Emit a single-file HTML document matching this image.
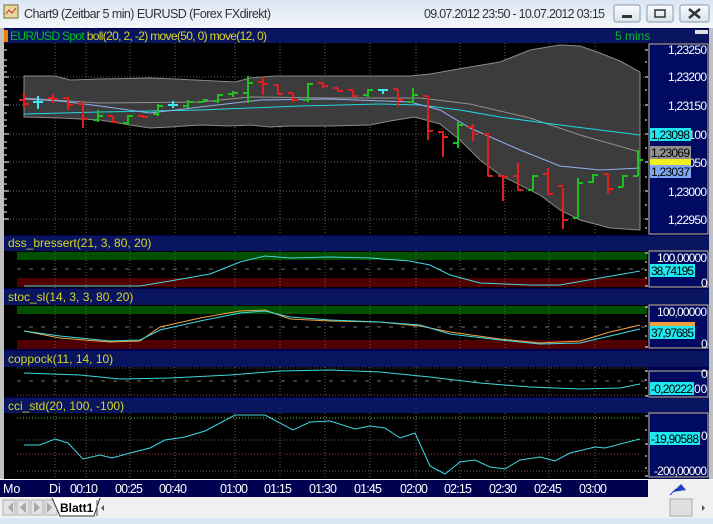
<!DOCTYPE html>
<html><head><meta charset="utf-8"><style>
html,body{margin:0;padding:0;width:713px;height:524px;overflow:hidden;background:#000050;font-family:"Liberation Sans",sans-serif}
</style></head><body>
<svg width="713" height="524" viewBox="0 0 713 524" xmlns="http://www.w3.org/2000/svg" font-family="Liberation Sans, sans-serif">
<defs><linearGradient id="tb" x1="0" y1="0" x2="0" y2="1"><stop offset="0" stop-color="#dbe6f4"/><stop offset="1" stop-color="#f4f7fb"/></linearGradient>
<linearGradient id="btn" x1="0" y1="0" x2="0" y2="1"><stop offset="0" stop-color="#fbfcfe"/><stop offset="1" stop-color="#d8e1ee"/></linearGradient></defs>
<rect x="0" y="0" width="713" height="28" fill="url(#tb)"/>
<rect x="4" y="5" width="14" height="13" fill="#e8d8a0" stroke="#7a6a30"/><path d="M6 14 L9 10 L12 13 L16 8" stroke="#c03030" fill="none"/>
<text x="24" y="18" font-size="12.5" fill="#333" textLength="247">Chart9 (Zeitbar 5 min)  EURUSD (Forex FXdirekt)</text>
<text x="424" y="18" font-size="12.5" fill="#333" textLength="181">09.07.2012 23:50 - 10.07.2012 03:15</text>
<rect x="614" y="5" width="26" height="17" rx="2" fill="url(#btn)" stroke="#8a9ab0"/><rect x="622" y="15" width="10" height="3" fill="#333"/>
<rect x="647" y="5" width="26" height="17" rx="2" fill="url(#btn)" stroke="#8a9ab0"/><rect x="655" y="10" width="10" height="7" fill="none" stroke="#333" stroke-width="1.5"/>
<rect x="680" y="5" width="29" height="17" rx="2" fill="url(#btn)" stroke="#8a9ab0"/><path d="M689 9 L700 18 M700 9 L689 18" stroke="#333" stroke-width="2.5"/>
<rect x="0" y="28" width="713" height="469" fill="#000050"/>
<rect x="0" y="28" width="4" height="469" fill="#c0c0c0"/>
<rect x="709" y="28" width="4" height="469" fill="#c0c0c0"/>
<rect x="4" y="29" width="705" height="14" fill="#0a1560"/>
<rect x="4" y="30" width="4" height="12" fill="#f08000"/>
<text x="10" y="40" font-size="12" textLength="257"><tspan fill="#00c020">EUR/USD Spot</tspan><tspan fill="#d8d820"> boll(20, 2, -2) move(50, 0) move(12, 0)</tspan></text>
<text x="615" y="40" font-size="12" fill="#00c020">5 mins</text>
<rect x="695" y="30" width="13" height="4" fill="#e0e0e0"/>
<g font-size="12" fill="#d8d820">
<rect x="4" y="236" width="705" height="15" fill="#0a1560"/><text x="8" y="247">dss_bressert(21, 3, 80, 20)</text>
<rect x="4" y="289" width="705" height="16" fill="#0a1560"/><text x="8" y="301">stoc_sl(14, 3, 3, 80, 20)</text>
<rect x="4" y="351" width="705" height="16" fill="#0a1560"/><text x="8" y="363">coppock(11, 14, 10)</text>
<rect x="4" y="398" width="705" height="15" fill="#0a1560"/><text x="8" y="410">cci_std(20, 100, -100)</text>
</g>
<rect x="4" y="43" width="644" height="192" fill="#000"/>
<rect x="4" y="251" width="644" height="37" fill="#000"/>
<rect x="4" y="305" width="644" height="44" fill="#000"/>
<rect x="4" y="367" width="644" height="30" fill="#000"/>
<rect x="4" y="413" width="644" height="66" fill="#000"/>
<rect x="17" y="252" width="630" height="8" fill="#005000"/><rect x="17" y="278" width="630" height="9" fill="#500000"/>
<rect x="17" y="306" width="630" height="8" fill="#005000"/><rect x="17" y="340" width="630" height="9" fill="#500000"/>
<g stroke="#606060" stroke-dasharray="1,2" stroke-width="1">
<path d="M55 43V235M86 43V235M130 43V235M175 43V235M235 43V235M280 43V235M325 43V235M370 43V235M416 43V235M460 43V235M505 43V235M549 43V235M595 43V235"/>
<path d="M4 77H648M4 105H648M4 134H648M4 162H648M4 191H648M4 219H648"/>
<path d="M55 251V288M86 251V288M130 251V288M175 251V288M235 251V288M280 251V288M325 251V288M370 251V288M416 251V288M460 251V288M505 251V288M549 251V288M595 251V288"/>
<path d="M55 305V349M86 305V349M130 305V349M175 305V349M235 305V349M280 305V349M325 305V349M370 305V349M416 305V349M460 305V349M505 305V349M549 305V349M595 305V349"/>
<path d="M55 367V397M86 367V397M130 367V397M175 367V397M235 367V397M280 367V397M325 367V397M370 367V397M416 367V397M460 367V397M505 367V397M549 367V397M595 367V397"/>
<path d="M55 413V479M86 413V479M130 413V479M175 413V479M235 413V479M280 413V479M325 413V479M370 413V479M416 413V479M460 413V479M505 413V479M549 413V479M595 413V479"/>
<path d="M17 368H648M17 395H648M17 440H648M17 471H648"/>
</g>
<g stroke="#707070" stroke-dasharray="4,8"><path d="M17 269H648M17 327H648M17 381H648"/></g>
<path d="M17 418H640" stroke="#60c040" stroke-dasharray="1,2"/>
<path d="M17 454H640" stroke="#c03030" stroke-dasharray="1,2"/>
<g stroke="#fff"><path d="M4 50h3M4 60h3M4 66h3M4 72h3M4 77h5M4 85h3M4 91h3M4 97h3M4 105h5M4 113h3M4 120h3M4 126h3M4 134h5M4 142h3M4 148h3M4 155h3M4 162h5M4 170h3M4 177h3M4 184h3M4 191h5M4 199h3M4 205h3M4 212h3M4 219h5"/></g>
<path d="M24 76L55 76L70 80L100 79L150 78L175 79L235 82L250 78L275 76L330 76L410 76L430 74L470 67L500 62L530 50L560 45L580 46L600 53L620 61L640 72L640 230L610 228L580 220L560 210L540 195L500 175L480 160L460 140L440 124L415 117L390 121L370 125L330 126L290 126L270 127L250 125L230 126L200 125L170 127L150 128L130 125L100 120L60 118L24 117Z" fill="#3c3c3c" stroke="#8a8a8a"/>
<polyline points="24,98 100,103 200,102 250,97 330,98 420,98 470,104 530,118 580,135 640,152" fill="none" stroke="#909090"/>
<polyline points="24,114 100,112 200,110 300,106 380,104 420,105 460,110 500,117 560,125 600,130 640,135" fill="none" stroke="#20d8e0"/>
<polyline points="24,99 60,101 100,106 150,113 200,107 260,100 330,99 410,102 440,110 470,128 520,150 560,166 600,170 640,168" fill="none" stroke="#90b0f0"/>
<g stroke-width="2" fill="none">
<g stroke="#e02020">
<path d="M24 93V108M19 100h5M24 104h5"/>
<path d="M53 94V103M48 98h5M53 99h5"/>
<path d="M68 97V110M63 98h5M68 105h5"/>
<path d="M83 102V128M78 104h5M83 119h5"/>
<path d="M113 116V123M108 116h5M113 122h5"/>
<path d="M143 115V118M138 116h5M143 117h5"/>
<path d="M263 77V95M258 82h5M263 84h5"/>
<path d="M278 85V95M273 85h5M278 94h5"/>
<path d="M293 93V102M288 93h5M293 100h5"/>
<path d="M323 82V88M318 83h5M323 86h5"/>
<path d="M338 88V92M333 88h5M338 91h5"/>
<path d="M353 91V97M348 90h5M353 96h5"/>
<path d="M398 89V106M393 89h5M398 100h5"/>
<path d="M428 96V140M423 96h5M428 131h5"/>
<path d="M443 131V157M438 132h5M443 137h5"/>
<path d="M473 124V141M468 127h5M473 134h5"/>
<path d="M488 133V176M483 134h5M488 176h5"/>
<path d="M503 175V201M498 176h5M503 177h5"/>
<path d="M518 163V190M513 176h5M518 190h5"/>
<path d="M548 168V195M543 174h5M548 194h5"/>
<path d="M563 188V229M558 186h5M563 220h5"/>
<path d="M608 174V194M603 174h5M608 189h5"/>
</g>
<g stroke="#20c020">
<path d="M98 110V122M93 120h5M98 116h5"/>
<path d="M128 115V125M123 123h5M128 116h5"/>
<path d="M158 104V116M153 114h5M158 106h5"/>
<path d="M188 100V108M183 106h5M188 102h5"/>
<path d="M203 100V103M198 102h5M203 100h5"/>
<path d="M218 94V103M213 101h5M218 95h5"/>
<path d="M233 91V97M228 94h5M233 93h5"/>
<path d="M248 76V103M243 93h5M248 83h5"/>
<path d="M308 83V102M303 100h5M308 84h5"/>
<path d="M368 89V97M363 95h5M368 90h5"/>
<path d="M413 88V103M408 102h5M413 95h5"/>
<path d="M458 122V148M453 143h5M458 125h5"/>
<path d="M533 175V190M528 190h5M533 176h5"/>
<path d="M578 178V218M573 218h5M578 183h5"/>
<path d="M593 174V183M588 182h5M593 175h5"/>
<path d="M623 175V187M618 187h5M623 176h5"/>
<path d="M638 150V176M633 176h5M638 160h5"/>
</g>
<g stroke="#40e8f0">
<path d="M38 96V109M33 102h10"/>
<path d="M173 101V108M168 105h10"/>
<path d="M383 89V94M378 90h10"/>
</g>
</g>
<polyline points="24,286 140,286 170,281 210,274 240,262 265,256 290,258 330,257 370,258 410,261 430,265 450,275 480,283 530,285 560,285 600,278 640,271" fill="none" stroke="#40d8e0"/>
<polyline points="24,331 60,338 110,342 140,341 160,327 200,318 240,311 265,310 290,319 330,321 380,322 420,326 450,332 500,339 540,343 580,341 610,332 640,325" fill="none" stroke="#f0a040"/>
<polyline points="24,331 60,336 110,341 140,340 160,330 200,321 240,313 265,311 290,317 330,320 380,322 420,325 450,334 500,340 540,344 580,343 610,336 640,329" fill="none" stroke="#40d8e0"/>
<polyline points="24,373 80,375 120,379 170,378 230,375 280,371 330,370 380,372 430,377 480,383 530,387 580,389 620,388 640,384" fill="none" stroke="#40d8e0"/>
<polyline points="24,445 40,445 55,439 68,443 83,459 100,455 112,458 130,453 150,448 165,440 185,437 205,431 235,415 265,415 293,430 310,422 330,421 355,429 370,426 385,428 400,438 415,433 430,466 445,474 460,462 475,460 490,467 505,469 520,460 540,457 555,461 570,453 595,447 605,448 640,439" fill="none" stroke="#40d8e0"/>
<g fill="#000a60" stroke="#c8b890">
<rect x="649" y="44" width="59" height="190"/>
<rect x="649" y="251" width="59" height="36"/>
<rect x="649" y="305" width="59" height="43"/>
<rect x="649" y="371" width="59" height="26"/>
<rect x="649" y="413" width="59" height="64"/>
</g>
<g stroke="#fff"><path d="M645 50h3M645 62h2M645 77h3M645 90h2M645 105h3M645 120h2M645 134h3M645 148h2M645 162h3M645 177h2M645 191h3M645 205h2M645 219h3M645 228h2"/>
<path d="M645 253h3M645 262h2M645 270h2M645 278h2M645 286h3M645 307h3M645 316h2M645 326h2M645 336h2M645 347h3M645 371h3M645 380h2M645 388h2M645 396h3M645 416h3M645 430h2M645 444h3M645 456h2M645 468h2M645 476h3"/></g>
<g font-size="12" fill="#fff">
<text x="668" y="54" textLength="39">1,23250</text><text x="668" y="81" textLength="39">1,23200</text><text x="668" y="110" textLength="39">1,23150</text><text x="668" y="139" textLength="39">1,23100</text><text x="668" y="167" textLength="39">1,23050</text><text x="668" y="196" textLength="39">1,23000</text><text x="668" y="224" textLength="39">1,22950</text>
<text x="657" y="262" textLength="50">100,00000</text><text x="701" y="287">0</text>
<text x="657" y="316" textLength="50">100,00000</text><text x="701" y="348">0</text>
<text x="701" y="378">0</text><text x="694" y="393">00</text>
<text x="701" y="440">0</text><text x="654" y="475" textLength="53">-200,00000</text>
</g>
<g font-size="12" fill="#000">
<rect x="650" y="128" width="41" height="13" fill="#20e8f0"/><text x="651" y="139" textLength="39">1,23098</text>
<rect x="650" y="146" width="41" height="13" fill="#909090"/><text x="651" y="157" textLength="39">1,23069</text>
<rect x="650" y="159" width="41" height="6" fill="#f0f020"/>
<rect x="650" y="165" width="41" height="13" fill="#80a8f0"/><text x="651" y="176" textLength="39">1,23037</text>
<rect x="650" y="264" width="45" height="13" fill="#20e8f0"/><text x="651" y="275" textLength="43">38,74195</text>
<rect x="650" y="322" width="45" height="4" fill="#f0a040"/>
<rect x="650" y="326" width="45" height="13" fill="#20e8f0"/><text x="651" y="337" textLength="43">37,97685</text>
<rect x="650" y="382" width="44" height="13" fill="#20e8f0"/><text x="651" y="393" textLength="42">-0,20222</text>
<rect x="650" y="432" width="50" height="13" fill="#20e8f0"/><text x="651" y="443" textLength="48">-19,90588</text>
</g>
<rect x="0" y="479" width="713" height="18" fill="#000050"/>
<rect x="0" y="479" width="713" height="1" fill="#fff"/>
<rect x="648" y="480" width="65" height="17" fill="#f0f0f0"/>
<path d="M673 492 L681 484 L686 490 Z" fill="#2040c0"/><path d="M670 495 L676 489" stroke="#2040c0"/>
<g font-size="12.5" fill="#fff"><text x="3" y="493">Mo</text><text x="49" y="493">Di</text><text x="70" y="493" textLength="28">00:10</text><text x="115" y="493" textLength="28">00:25</text><text x="159" y="493" textLength="28">00:40</text><text x="220" y="493" textLength="28">01:00</text><text x="264" y="493" textLength="28">01:15</text><text x="309" y="493" textLength="28">01:30</text><text x="354" y="493" textLength="28">01:45</text><text x="400" y="493" textLength="28">02:00</text><text x="444" y="493" textLength="28">02:15</text><text x="489" y="493" textLength="28">02:30</text><text x="534" y="493" textLength="28">02:45</text><text x="579" y="493" textLength="28">03:00</text></g>
<rect x="0" y="497" width="713" height="21" fill="#f0f0f0"/>
<g fill="#a8a8a8"><rect x="3" y="500" width="12" height="15" fill="#e4e4e4" stroke="#b0b0b0"/><path d="M7 502v11M13 502l-5 5.5 5 5.5z"/>
<rect x="17" y="500" width="12" height="15" fill="#e4e4e4" stroke="#b0b0b0"/><path d="M26 502l-6 5.5 6 5.5z"/>
<rect x="31" y="500" width="12" height="15" fill="#e4e4e4" stroke="#b0b0b0"/><path d="M34 502l6 5.5-6 5.5z"/>
<rect x="45" y="500" width="12" height="15" fill="#e4e4e4" stroke="#b0b0b0"/><path d="M47 502l5 5.5-5 5.5zM54 502v11"/></g>
<path d="M52 498 L60 516 L94 516 L100 498" fill="#fff" stroke="#333"/>
<text x="60" y="512" font-size="12" font-weight="bold" fill="#000">Blatt1</text>
<path d="M97 500v16" stroke="#555"/><path d="M104 505l-3 3 3 3z" fill="#555"/>
<rect x="670" y="499" width="22" height="17" fill="#e0e0e0" stroke="#aaa"/><path d="M702 505l3 3-3 3z" fill="#555"/>
<rect x="0" y="518" width="713" height="6" fill="#dbe7f4"/>
</svg>
</body></html>
